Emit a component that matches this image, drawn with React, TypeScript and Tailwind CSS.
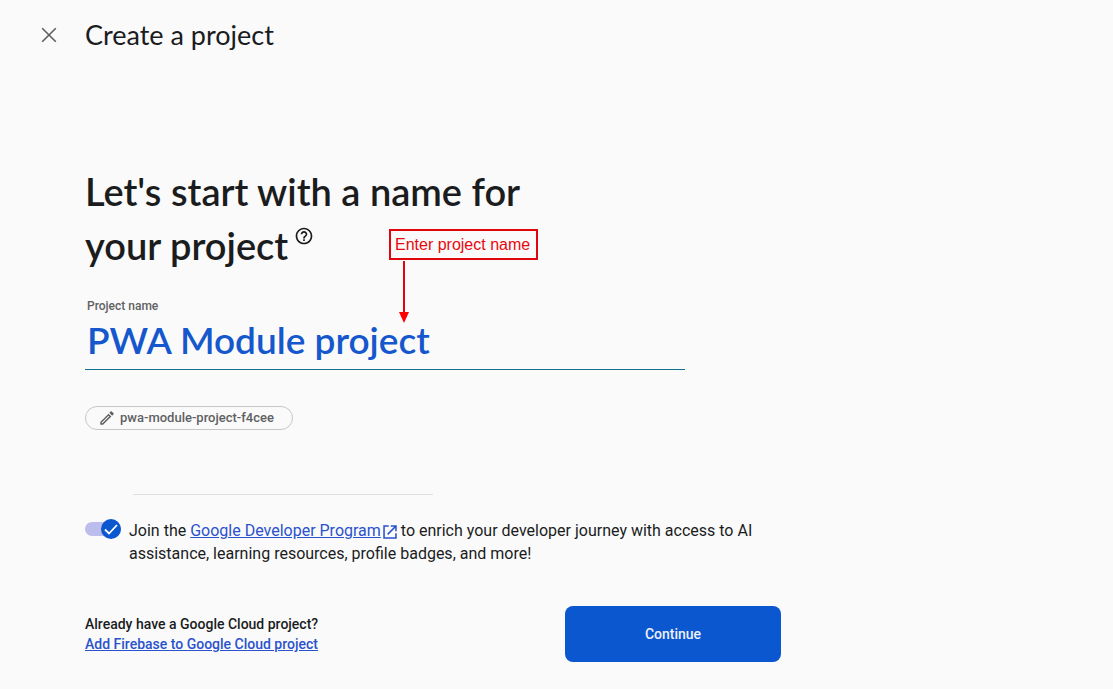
import { useState } from "react";
import { MdHelpOutline, MdOutlineEdit } from "react-icons/md";

function CloseIcon() {
  return (
    <svg className="size-6" viewBox="0 0 24 24" fill="none" stroke="currentColor" strokeWidth="1.6" aria-hidden="true">
      <path d="M5.2 5.2l13.6 13.6M18.8 5.2 5.2 18.8" />
    </svg>
  );
}

function CheckIcon() {
  return (
    <svg className="size-5" viewBox="0 0 20 20" fill="none" stroke="currentColor" strokeWidth="1.8" aria-hidden="true">
      <path d="M4 10.5l4 4 8-8.5" />
    </svg>
  );
}

function OpenInNewIcon() {
  return (
    <svg className="ml-0.5 inline size-3.5 align-[-3px]" viewBox="1 1 13.5 13.5" fill="none" stroke="currentColor" strokeWidth="1.5" aria-hidden="true">
      <path d="M6.5 2H2v11.5h11.5V9M8.5 2h5v5M13.5 2 5.5 10" />
    </svg>
  );
}

function NameHint() {
  return (
    <div className="pointer-events-none absolute top-[65px] left-76">
      <div className="border-2 border-[#e0060c] pr-1.5 pl-1 font-['Liberation_Sans',sans-serif] text-base leading-[27px] whitespace-nowrap text-[#e8080e]">
        Enter project name
      </div>
      <svg className="mt-px ml-2.5 h-[62px] w-2.5" viewBox="0 0 10 62" aria-hidden="true">
        <path d="M5 0v52" stroke="#e0060c" strokeWidth="2" />
        <path d="M0 51h10l-5 11z" fill="#ff0000" />
      </svg>
    </div>
  );
}

export default function App() {
  const [name, setName] = useState("PWA Module project");
  const [joined, setJoined] = useState(true);

  return (
    <div className="min-h-screen bg-[#fafafa] font-[Roboto,sans-serif] text-[#1a1c1e]">
      <header className="flex items-center gap-6 px-[37px] pt-[17px]">
        <button type="button" aria-label="Close" className="flex size-6 items-center justify-center text-[#5c5f61]">
          <CloseIcon />
        </button>
        <h1 className="font-[Lato,sans-serif] text-[27px] leading-9">Create a project</h1>
      </header>

      <main className="max-w-[781px] pt-[111px] pl-[85px]">
        <div className="relative">
          <h2 className="max-w-[480px] font-[Lato,sans-serif] text-[38px] leading-[54px] font-semibold">
            Let's start with a name for your project
            <button type="button" aria-label="Help" className="ml-1.5 align-super">
              <MdHelpOutline className="size-5" />
            </button>
          </h2>
          <NameHint />
        </div>

        <div className="mt-[26px] max-w-[600px]">
          <label htmlFor="project-name" className="block pl-0.5 text-xs leading-4 font-medium text-[#5f6163]">
            Project name
          </label>
          <input
            id="project-name"
            type="text"
            value={name}
            onChange={(e) => setName(e.target.value)}
            className="h-14 w-full border-b border-[#11718c] pb-1 pl-0.5 font-[Lato,sans-serif] text-[37px] font-semibold text-[#1557cc] outline-none"
          />
        </div>

        <button
          type="button"
          className="mt-9 flex h-6 items-center gap-1 rounded-full border border-[#c4c6c8] pr-[18px] pl-3 text-[13px] font-medium text-[#5f6163]"
        >
          <MdOutlineEdit className="size-[18px]" />
          pwa-module-project-f4cee
        </button>

        <hr className="mt-16 ml-12 max-w-[300px] border-[#e0e0e0]" />

        <div className="mt-6 flex items-start gap-2">
          <label className="relative flex h-5 w-9 shrink-0 items-center">
            <input
              type="checkbox"
              role="switch"
              aria-labelledby="join-text"
              checked={joined}
              onChange={(e) => setJoined(e.target.checked)}
              className="peer h-3.5 w-full appearance-none rounded-full bg-gray-300 checked:bg-[#bbbdec]"
            />
            <span className="absolute left-0 flex size-5 items-center justify-center rounded-full bg-gray-500 text-white peer-checked:right-0 peer-checked:left-auto peer-checked:bg-[#0b57d0]">
              {joined && <CheckIcon />}
            </span>
          </label>
          <p id="join-text" className="text-base leading-[23px]">
            Join the{" "}
            <a href="#developer-program" className="text-[#2a52cc]">
              <span className="underline">Google Developer Program</span>
              <OpenInNewIcon />
            </a>{" "}
            to enrich your developer journey with access to AI assistance, learning resources, profile badges, and more!
          </p>
        </div>

        <div className="mt-[41px] flex items-center justify-between">
          <div className="text-sm leading-5 font-medium">
            <p>Already have a Google Cloud project?</p>
            <a href="#add-firebase" className="text-[#2a52cc] underline">
              Add Firebase to Google Cloud project
            </a>
          </div>
          <button type="button" className="h-14 w-54 rounded-lg bg-[#0b57d0] text-sm font-medium text-[#edf1fb]">
            Continue
          </button>
        </div>
      </main>
    </div>
  );
}
